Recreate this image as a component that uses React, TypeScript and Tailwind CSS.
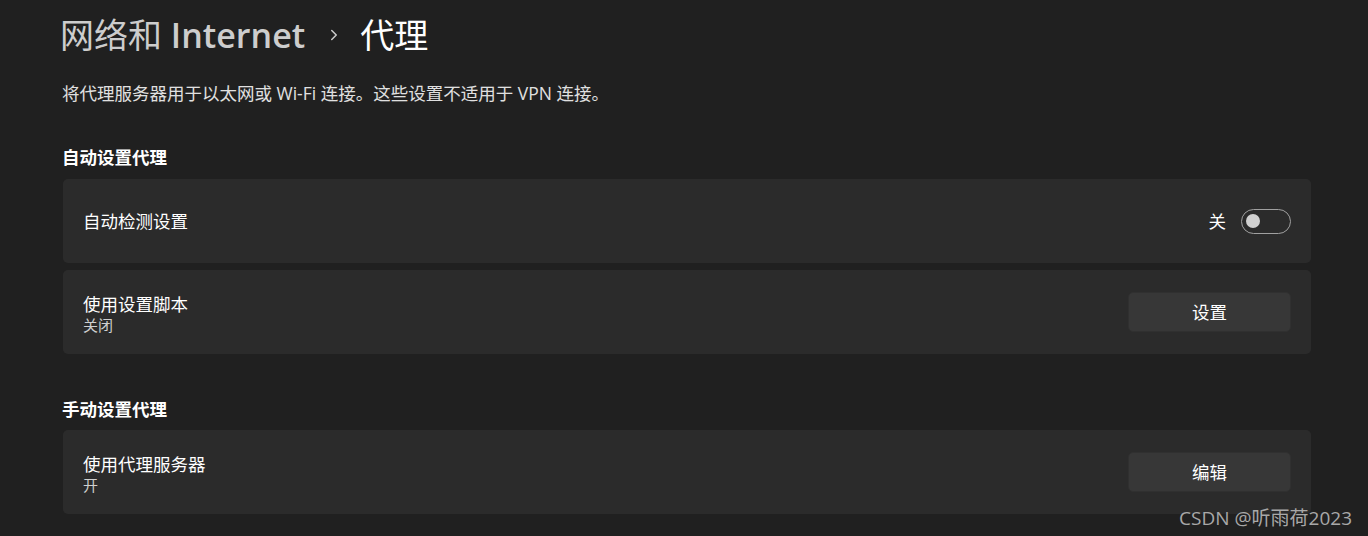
import { ChevronRight } from 'lucide-react';

const font = { fontFamily: '"Segoe UI", "Open Sans", "Noto Sans CJK SC", sans-serif' };

function Toggle() {
  return (
    <div className="flex items-center gap-[15px]">
      <span className="text-[17.5px] leading-6 text-white">关</span>
      <div className="flex h-[25px] w-[50px] items-center rounded-full border border-[#a0a0a0] pl-[4px]">
        <div className="h-[14px] w-[14px] rounded-full bg-[#d0d0d0]" />
      </div>
    </div>
  );
}

function Button({ label }: { label: string }) {
  return (
    <button
      type="button"
      className="flex h-[40px] w-[163px] items-center justify-center rounded-[5px] border border-[#303030] bg-[#373737] pt-px text-[17.5px] text-white"
    >
      {label}
    </button>
  );
}

function Card({ title, sub, right }: { title: string; sub?: string; right: React.ReactNode }) {
  return (
    <div className="flex h-[84px] items-center justify-between rounded-[5px] bg-[#2b2b2b] pl-[20px] pr-[20px]">
      <div className={`flex flex-col ${sub ? 'pt-[4px]' : ''}`}>
        <span className="text-[17.5px] leading-[22px] text-white">{title}</span>
        {sub && <span className="text-[15px] leading-[20px] text-[#cfcfcf]">{sub}</span>}
      </div>
      {right}
    </div>
  );
}

export default function App() {
  return (
    <div className="relative h-[536px] overflow-hidden bg-[#202020] pl-[62px] pr-[57px] pt-[13px]" style={font}>
      <div className="-ml-[2px] flex h-[44px] items-center text-[34px] leading-[44px]">
        <span className="text-[#cdcdcd]">
          网络和 <span className="font-semibold">Internet</span>
        </span>
        <ChevronRight className="ml-[20px] mr-[17px] h-[18px] w-[18px] text-[#cdcdcd]" strokeWidth={2} />
        <span className="text-white">代理</span>
      </div>

      <p className="mt-[24px] text-[17.5px] leading-6 text-[#e0e0e0]">
        将代理服务器用于以太网或 Wi-Fi 连接。这些设置不适用于 VPN 连接。
      </p>

      <h2 className="mt-[40px] text-[17.5px] font-semibold leading-6 text-white">自动设置代理</h2>
      <div className="mt-[10px] flex flex-col gap-[7px] pl-px">
        <Card title="自动检测设置" right={<Toggle />} />
        <Card title="使用设置脚本" sub="关闭" right={<Button label="设置" />} />
      </div>

      <h2 className="mt-[43px] text-[17.5px] font-semibold leading-6 text-white">手动设置代理</h2>
      <div className="mt-[9px] flex flex-col pl-px">
        <Card title="使用代理服务器" sub="开" right={<Button label="编辑" />} />
      </div>

      <div className="absolute bottom-[6px] right-[16px] text-[19px] leading-6 text-[#a8a8a8]">
        CSDN @听雨荷2023
      </div>
    </div>
  );
}
